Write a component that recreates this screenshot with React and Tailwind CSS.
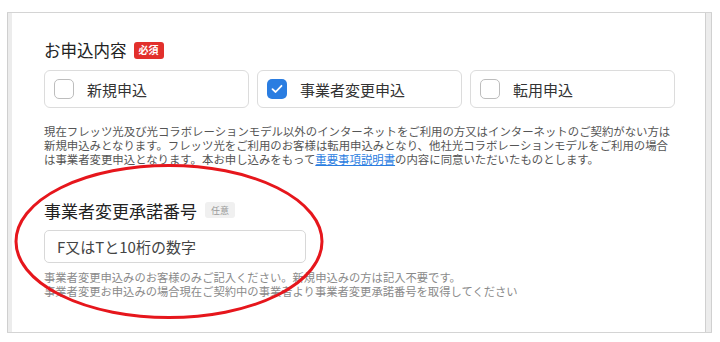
import React from "react";

const font = { fontFamily: '"Noto Sans CJK JP", "Noto Sans", sans-serif' };

function Option({ label, checked }) {
  return (
    <div className="flex h-[38px] w-[205px] items-center rounded-[6px] border border-[#dcdcdc] bg-white pl-[9px]">
      {checked ? (
        <div className="flex h-[20px] w-[20px] items-center justify-center rounded-[5px] bg-[#2a7de1]">
          <svg width="12" height="10" viewBox="0 0 12 10" fill="none">
            <path d="M1.5 5.2 L4.6 8 L10.5 1.8" stroke="white" strokeWidth="1.8" strokeLinecap="round" strokeLinejoin="round" />
          </svg>
        </div>
      ) : (
        <div className="h-[20px] w-[20px] rounded-[5px] border border-[#bdbdbd] bg-white" />
      )}
      <span className="ml-[13px] text-[15px] leading-none text-[#333]">{label}</span>
    </div>
  );
}

export default function App() {
  return (
    <div className="relative h-[342px] w-[720px] overflow-hidden bg-white" style={font}>
      <div className="pl-[7px] pt-[12px]">
        <div className="flex h-[321px] w-[705px] border-y border-[#d4d4d4]">
          <div className="w-[5px] border-l border-[#cfcfcf] bg-[#ececec]" />
          <div className="flex-1 pl-[32px] pt-[25px]">
            <div className="flex h-[24px] items-center">
              <span className="text-[16.5px] leading-none text-[#222]">お申込内容</span>
              <span className="ml-[7px] flex h-[17px] w-[30px] items-center justify-center rounded-[3px] bg-[#e2302c] text-[10px] font-bold leading-none text-white">必須</span>
            </div>
            <div className="mt-[8px] flex gap-[8px]">
              <Option label="新規申込" />
              <Option label="事業者変更申込" checked />
              <Option label="転用申込" />
            </div>
            <p className="mt-[16px] text-[11.4px] leading-[14px] text-[#555]">
              現在フレッツ光及び光コラボレーションモデル以外のインターネットをご利用の方又はインターネットのご契約がない方は
              <br />
              新規申込みとなります。フレッツ光をご利用のお客様は転用申込みとなり、他社光コラボレーションモデルをご利用の場合
              <br />
              は事業者変更申込となります。本お申し込みをもって
              <span className="text-[#2a7de1] underline">重要事項説明書</span>
              の内容に同意いただいたものとします。
            </p>
            <div className="mt-[32px] flex h-[24px] items-center">
              <span className="text-[17px] leading-none text-[#222]">事業者変更承諾番号</span>
              <span className="ml-[8px] flex h-[16px] w-[30px] items-center justify-center rounded-[3px] bg-[#f0f0f0] text-[9px] leading-none text-[#9a9a9a]">任意</span>
            </div>
            <div className="mt-[8px] flex h-[33px] w-[262px] items-center rounded-[5px] border border-[#d8d8d8] pl-[12px] text-[15px] leading-none text-[#444]">
              F又はTと10桁の数字
            </div>
            <p className="mt-[7px] text-[11.3px] leading-[14px] text-[#8a8a8a]">
              事業者変更申込みのお客様のみご記入ください。新規申込みの方は記入不要です。
              <br />
              事業者変更お申込みの場合現在ご契約中の事業者より事業者変更承諾番号を取得してください
            </p>
          </div>
          <div className="w-[7px] border-x border-[#d0d0d0] bg-[#ececec]" />
        </div>
      </div>
      <svg className="pointer-events-none absolute left-0 top-0" width="720" height="342">
        <ellipse cx="169" cy="241.5" rx="153" ry="76" fill="none" stroke="#e6161c" strokeWidth="3" />
      </svg>
    </div>
  );
}
